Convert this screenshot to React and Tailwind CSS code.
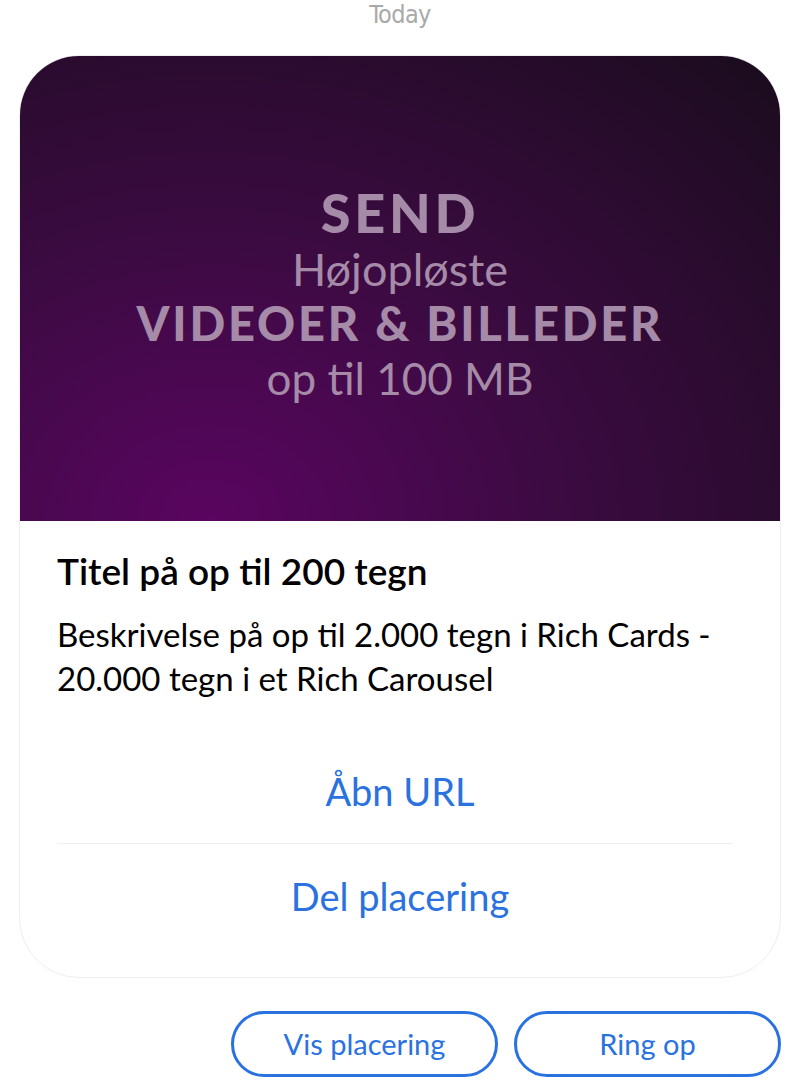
import React from 'react';

const font = { fontFamily: 'Lato, "Open Sans", sans-serif' };

const ActionRow = ({ label }) => (
  <div className="h-[104px] flex items-center justify-center">
    <span className="text-[38px] text-[#2a72e0]">{label}</span>
  </div>
);

const ChipButton = ({ label }) => (
  <button className="w-[267px] h-[66px] rounded-full border-[3px] border-[#2a72e0] text-[#2a72e0] text-[29px] flex items-center justify-center bg-white">
    {label}
  </button>
);

export default function App() {
  return (
    <div className="w-[800px] h-[1080px] bg-white overflow-hidden" style={font}>
      {/* date stamp */}
      <div className="h-[30px] flex items-center justify-center">
        <span className="text-[25px] text-[#a9a9a9] font-light tracking-tight" style={{ fontFamily: '"DejaVu Sans Condensed", "DejaVu Sans", sans-serif' }}>
          Today
        </span>
      </div>

      {/* rich card */}
      <div className="mt-[25px] mx-[19px] rounded-[60px] border border-[#eeeeee] overflow-hidden bg-white">
        <div className="h-[465px] flex flex-col items-center justify-center bg-[radial-gradient(ellipse_at_25%_100%,#5a0560_0%,#3a0b40_45%,#1a0c1d_100%)] text-[#a68ba9] text-center pt-[14px]">
          <div className="text-[54px] font-black leading-[56px] tracking-[0.07em]">SEND</div>
          <div className="text-[45px] leading-[56px]">Højopløste</div>
          <div className="text-[47px] font-black leading-[52px] tracking-[0.06em]">VIDEOER &amp; BILLEDER</div>
          <div className="text-[44px] leading-[58px]">op til 100 MB</div>
        </div>

        <div className="px-[37px] pt-[30px]">
          <div className="text-[37px] font-semibold leading-[40px] text-black">Titel på op til 200 tegn</div>
          <div className="mt-[21px] text-[33px] leading-[44px] text-black">
            Beskrivelse på op til 2.000 tegn i Rich Cards -<br />
            20.000 tegn i et Rich Carousel
          </div>
        </div>

        <div className="mt-[39px] pb-[29px]">
          <ActionRow label="Åbn URL" />
          <div className="ml-[37px] mr-[48px] h-px bg-[#f0f0f0]" />
          <ActionRow label="Del placering" />
        </div>
      </div>

      {/* suggestion chips */}
      <div className="mt-[33px] pr-[19px] flex justify-end gap-[16px]">
        <ChipButton label="Vis placering" />
        <ChipButton label="Ring op" />
      </div>
    </div>
  );
}
